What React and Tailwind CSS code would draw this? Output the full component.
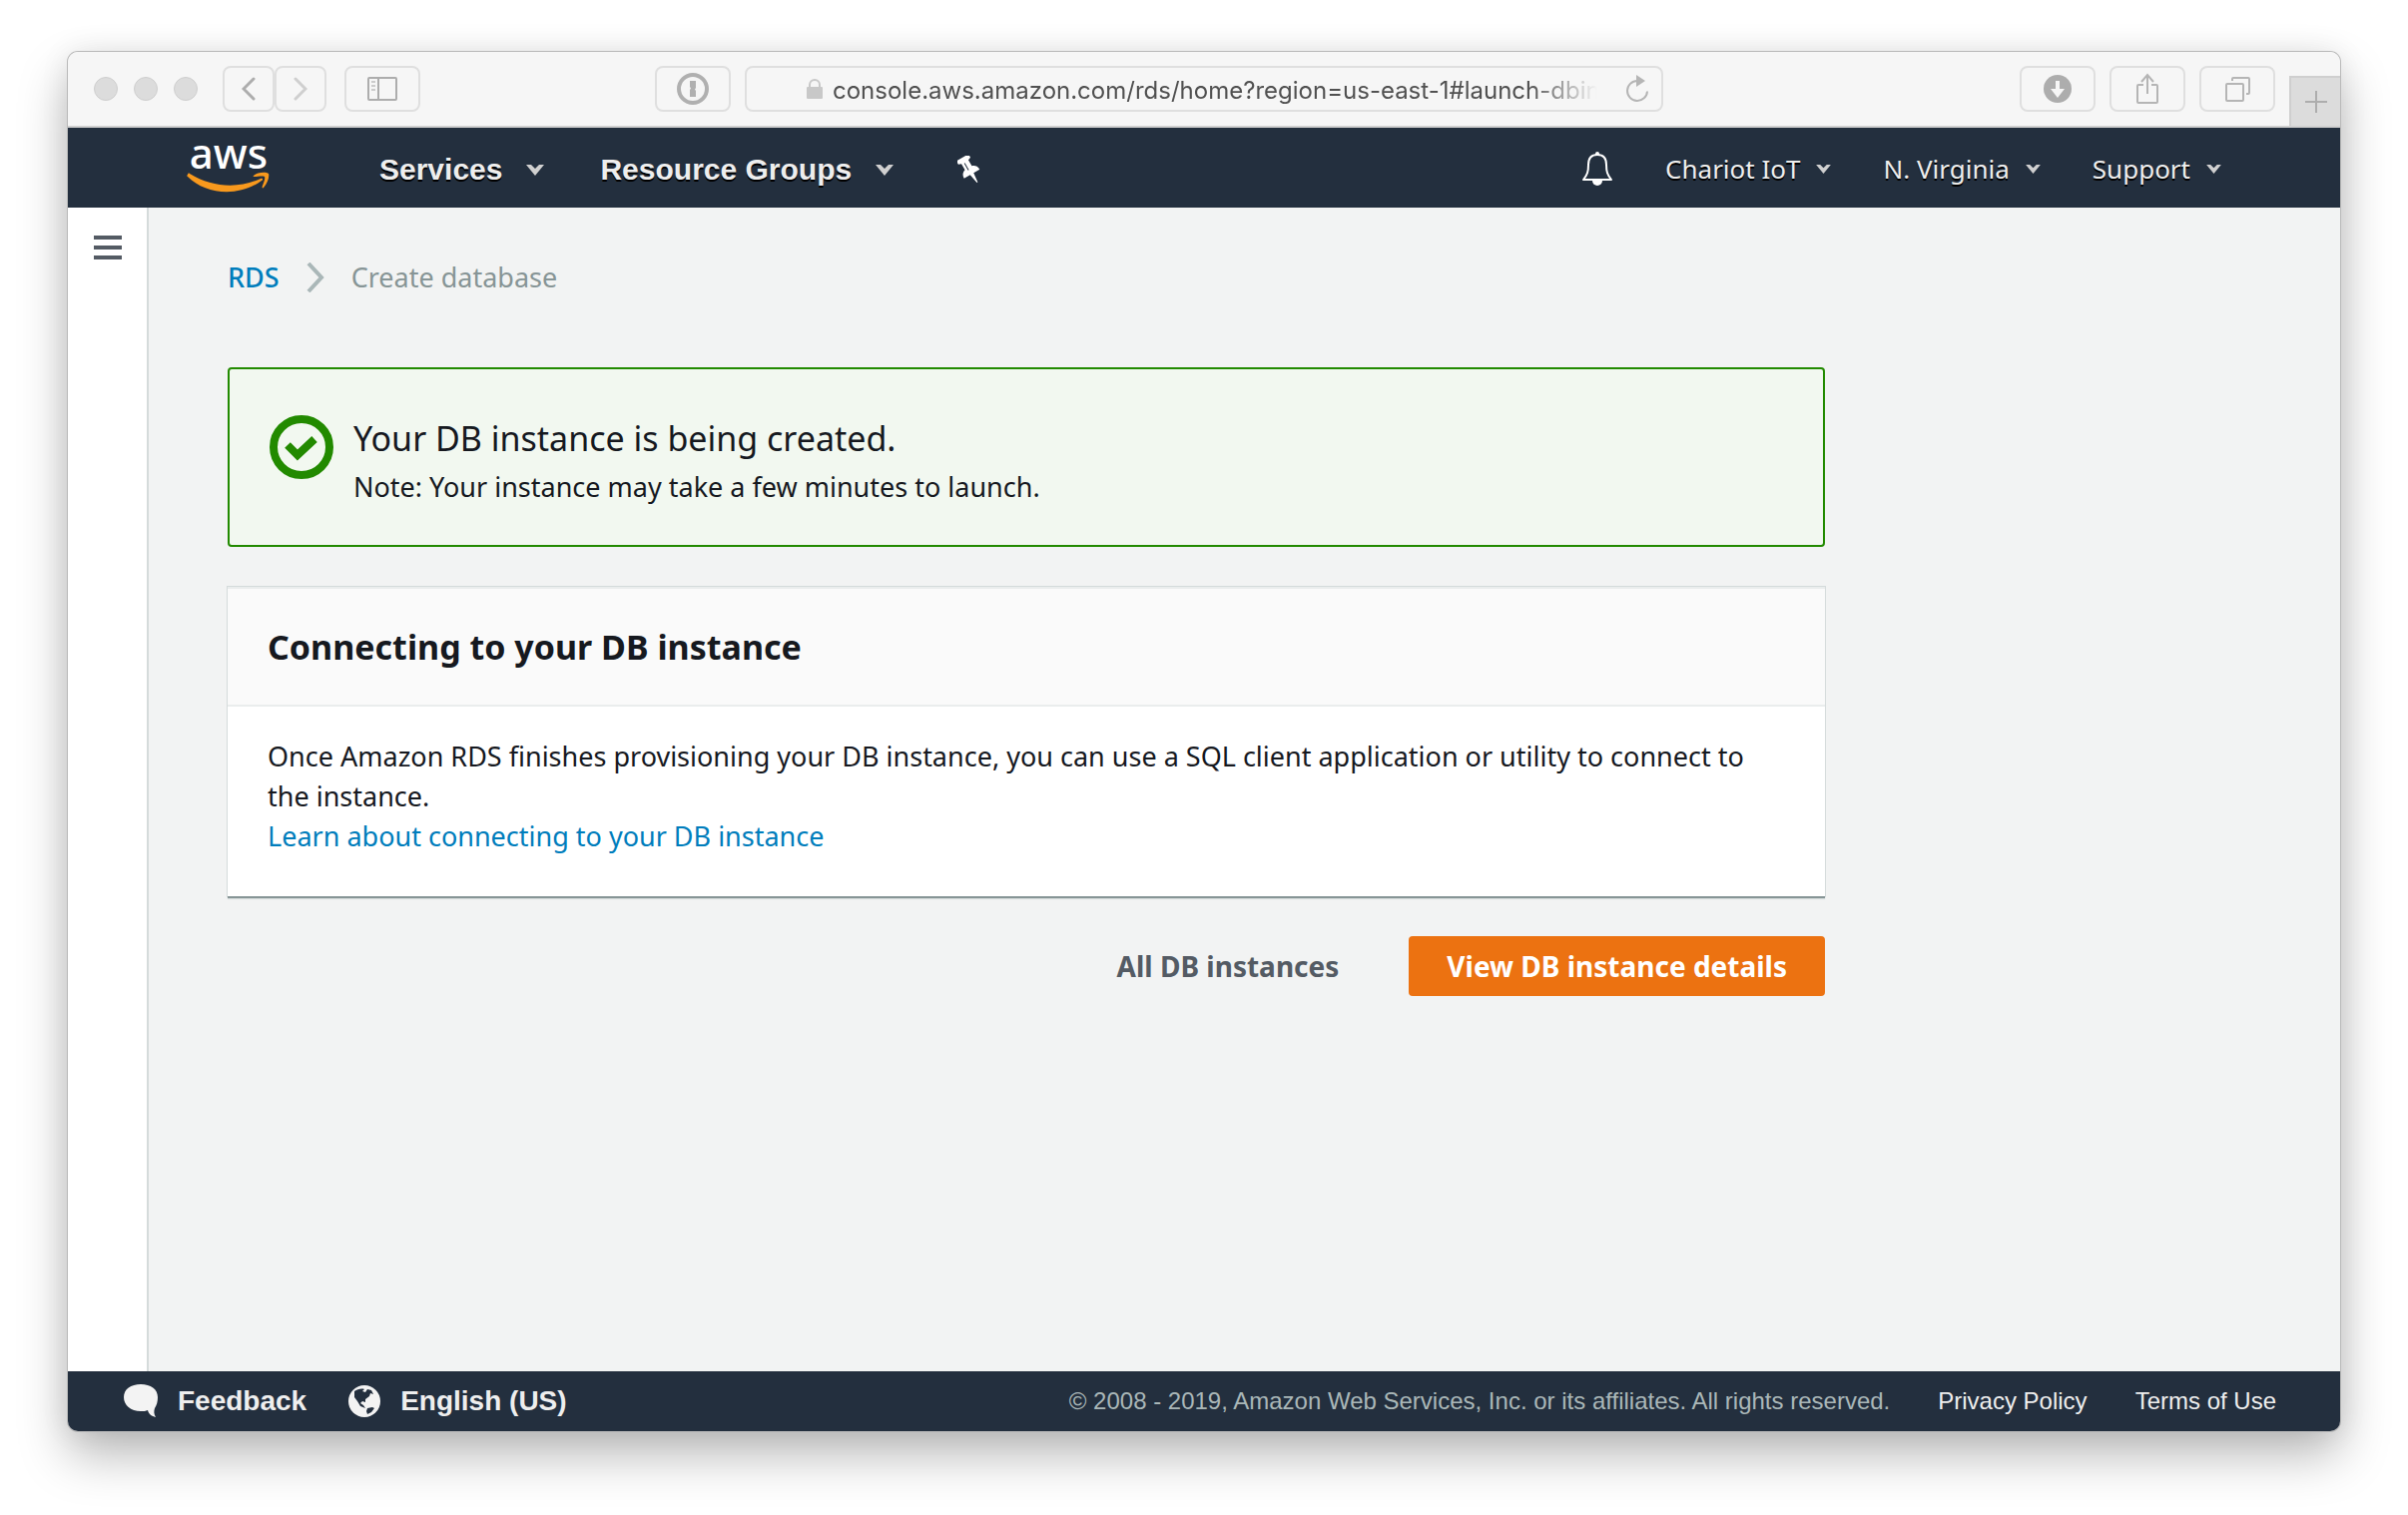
import React from "react";

const icon = "block shrink-0";

function ToolbarButton({ label, width = "w-[76px]", children }) {
  return (
    <button
      type="button"
      aria-label={label}
      className={`${width} flex h-[46px] shrink-0 items-center justify-center rounded-lg border-2 border-[#dfdfdf] bg-[#f6f6f6]`}
    >
      {children}
    </button>
  );
}

function BackIcon({ flip }) {
  return (
    <svg width="14" height="24" viewBox="0 0 14 24" className={icon} fill="none" stroke={flip ? "#cfcfcf" : "#adadad"} strokeWidth="3" strokeLinecap="round">
      <path d={flip ? "M2 2l10 10L2 22" : "M12 2L2 12l10 10"} />
    </svg>
  );
}

function SidebarIcon() {
  return (
    <svg width="30" height="24" viewBox="0 0 30 24" className={icon} fill="none" stroke="#adadad" strokeWidth="2">
      <rect x="1" y="1" width="28" height="22" rx="1" />
      <path d="M11 1v22" />
      <path d="M4 5h4M4 9h4M4 13h4" stroke="#cbcbcb" />
    </svg>
  );
}

function PasswordIcon() {
  return (
    <svg width="32" height="32" viewBox="0 0 32 32" className={icon}>
      <circle cx="16" cy="16" r="14" fill="none" stroke="#b0b0b0" strokeWidth="4" />
      <path d="M13 8h6v7l-1 1.500 1 1.500v6h-6v-7l1-1.500-1-1.500z" fill="#b0b0b0" />
    </svg>
  );
}

function LockIcon() {
  return (
    <svg width="16" height="20" viewBox="0 0 16 20" className={icon}>
      <path d="M3 9V6a5 5 0 0 1 10 0v3" fill="none" stroke="#c8c8c8" strokeWidth="2" />
      <rect y="8" width="16" height="12" rx="1" fill="#c8c8c8" />
    </svg>
  );
}

function ReloadIcon() {
  return (
    <svg width="24" height="28" viewBox="0 0 24 28" className={icon}>
      <path d="M12 6a10 10 0 1 0 10 10.500" fill="none" stroke="#b5b5b5" strokeWidth="2" />
      <path d="M11 0l9 6-9 6z" fill="#b5b5b5" />
    </svg>
  );
}

function DownloadIcon() {
  return (
    <svg width="28" height="28" viewBox="0 0 28 28" className={icon}>
      <circle cx="14" cy="14" r="14" fill="#adadad" />
      <path d="M12 6h4v8h5l-7 9-7-9h5z" fill="#f6f6f6" />
    </svg>
  );
}

function ShareIcon() {
  return (
    <svg width="24" height="32" viewBox="0 0 24 32" className={icon} fill="none" stroke="#b5b5b5" strokeWidth="2">
      <path d="M8 12H3a1 1 0 0 0-1 1v16a1 1 0 0 0 1 1h18a1 1 0 0 0 1-1V13a1 1 0 0 0-1-1h-5M12 21V3M6 9l6-7 6 7" />
    </svg>
  );
}

function TabsIcon() {
  return (
    <svg width="26" height="26" viewBox="0 0 26 26" className={icon} fill="none" stroke="#b5b5b5" strokeWidth="2">
      <rect x="2" y="8" width="17" height="17" rx="1" />
      <path d="M8 5V3a1 1 0 0 1 1-1h15a1 1 0 0 1 1 1v14a1 1 0 0 1-1 1h-2" />
    </svg>
  );
}

function Caret({ small }) {
  return (
    <svg width={small ? 15 : 18} height={small ? 9 : 11} viewBox="0 0 18 11" className={icon}>
      <path d="M0 0h5l4 4 4-4h5l-9 11z" fill="#d0d0d0" />
    </svg>
  );
}

function AwsLogo() {
  return (
    <svg width="84" height="80" viewBox="0 -13 84 80" className="block shrink-0 overflow-visible" role="img" aria-label="aws">
      <text x="42" y="28" textAnchor="middle" fontFamily="Noto Sans, sans-serif" fontSize="42" fontWeight="500" fill="#fff">aws</text>
      <path d="M1 34c0-1 1-2 2-1 23 14 49 15 71 5 2-1 3 1 1 2C52 57 19 54 1 36c-1-1-1-1 0-2z" fill="#f8991d" />
      <path d="M67 35c4-4 13-4 15-2 1 3-1 10-5 14-1 1-2 0-1-2 1-3 3-7 2-9-2-1-7 0-10 0-1 0-2 0-1-1z" fill="#f8991d" />
    </svg>
  );
}

function PinIcon() {
  return (
    <svg width="24" height="28" viewBox="0 0 24 28" className={icon}>
      <g transform="rotate(-30 12 14)">
        <path d="M5 0h14v4l-3 1v7c3 1 5 3 5 7h-7l-1 10h-1l-2-10H3c0-4 2-6 5-7V5L5 4z" fill="#fff" />
        <path d="M11 6v8" stroke="#232f3e" strokeWidth="1" />
      </g>
    </svg>
  );
}

function BellIcon() {
  return (
    <svg width="32" height="34" viewBox="0 0 32 34" className={icon}>
      <path d="M16 3c-6 0-9 4-9 10 0 7-1 10-5 15h28c-4-5-5-8-5-15 0-6-3-10-9-10z" fill="none" stroke="#fff" strokeWidth="2" strokeLinejoin="round" />
      <circle cx="16" cy="2" r="2" fill="#fff" />
      <path d="M11 29h10a5 5 0 0 1-10 0z" fill="#fff" />
    </svg>
  );
}

function BubbleIcon() {
  return (
    <svg width="34" height="34" viewBox="0 0 34 34" className={icon}>
      <path d="M17 0C7 0 0 5 0 13s7 14 17 14c3 0 5 0 7-1 1 4 4 6 8 7-2-3-2-6-1-9 2-3 3-7 3-11C34 5 27 0 17 0z" fill="#f3f3f3" />
    </svg>
  );
}

function GlobeIcon() {
  return (
    <svg width="32" height="32" viewBox="0 0 32 32" className={icon}>
      <circle cx="16" cy="16" r="16" fill="#f3f3f3" />
      <path d="M6 6c3-2 7-3 10-2l-2 2 3 1 2-3 4 1 2 4-3-1-1 3-4 3v3l-3-1-2 2 3 2 2 3-5-2-3-5-3-4z" fill="#232f3e" />
      <path d="M19 23l5-1 2 1-3 4-4 2-1-3z" fill="#232f3e" />
    </svg>
  );
}

function NavItem({ children }) {
  return (
    <button type="button" className="flex items-center gap-4 font-['Noto_Sans',sans-serif] text-[26px] leading-8 whitespace-nowrap text-[#eee] text-shadow-[0_2px_0_#000]">
      {children}
      <Caret small />
    </button>
  );
}

function MainNavItem({ children }) {
  return (
    <button type="button" className="flex items-center gap-6 text-[30px] leading-8 font-bold whitespace-nowrap text-[#eee] text-shadow-[0_2px_0_#000]">
      {children}
      <Caret />
    </button>
  );
}

export default function App() {
  return (
    <div className="flex min-h-screen flex-col bg-white px-[68px] pt-[52px] pb-[84px] font-['Liberation_Sans',Arial,sans-serif]">
      <div className="flex grow flex-col overflow-hidden rounded-[10px] shadow-[0_0_0_1px_#b9b9b9,0_24px_50px_rgba(0,0,0,0.28),0_0_30px_rgba(0,0,0,0.08)]">
        <div className="flex h-[76px] shrink-0 items-center border-b-2 border-[#d0d0d0] bg-[#f6f6f6]">
          <div className="flex gap-4 pl-[26px]">
            <span className="size-6 rounded-full border border-[#cfcfcf] bg-[#dcdcdc]" />
            <span className="size-6 rounded-full border border-[#cfcfcf] bg-[#dcdcdc]" />
            <span className="size-6 rounded-full border border-[#cfcfcf] bg-[#dcdcdc]" />
          </div>
          <div className="ml-[25px] flex">
            <ToolbarButton label="Back" width="w-[52px]"><BackIcon /></ToolbarButton>
            <ToolbarButton label="Forward" width="w-[52px]"><BackIcon flip /></ToolbarButton>
          </div>
          <div className="ml-[18px]">
            <ToolbarButton label="Sidebar"><SidebarIcon /></ToolbarButton>
          </div>
          <div className="flex grow justify-center gap-[14px] pr-[138px] pl-4">
            <ToolbarButton label="Passwords"><PasswordIcon /></ToolbarButton>
            <div className="flex h-[46px] w-[920px] items-center rounded-lg border-2 border-[#dfdfdf] pr-3 pl-[60px]">
              <LockIcon />
              <input
                type="text"
                aria-label="Address"
                defaultValue="console.aws.amazon.com/rds/home?region=us-east-1#launch-dbinstance"
                className="ml-[10px] min-w-0 grow bg-transparent pt-1 font-['Inter',sans-serif] text-[24px] leading-8 text-[#505050] outline-none mask-[linear-gradient(to_right,#000_91%,transparent_100%)]"
              />
              <button type="button" aria-label="Reload" className="ml-7"><ReloadIcon /></button>
            </div>
          </div>
          <div className="flex gap-[14px]">
            <ToolbarButton label="Downloads"><DownloadIcon /></ToolbarButton>
            <ToolbarButton label="Share"><ShareIcon /></ToolbarButton>
            <ToolbarButton label="Show tabs"><TabsIcon /></ToolbarButton>
          </div>
          <button type="button" aria-label="New tab" className="ml-[14px] flex h-[50px] w-[51px] items-center justify-center self-end border-t-2 border-l-2 border-[#cfcfcf] bg-[#dcdcdc]">
            <svg width="22" height="22" viewBox="0 0 22 22" stroke="#adadad" strokeWidth="2">
              <path d="M11 0v22M0 11h22" />
            </svg>
          </button>
        </div>

        <header className="flex h-20 shrink-0 items-center bg-[#232f3e] pr-[119px] pl-[119px]">
          <AwsLogo />
          <nav className="ml-[109px] flex items-center gap-[56px] pt-1">
            <MainNavItem>Services</MainNavItem>
            <MainNavItem>Resource Groups</MainNavItem>
            <button type="button" aria-label="Pin shortcuts" className="ml-2"><PinIcon /></button>
          </nav>
          <div className="ml-auto flex items-center gap-[52px] pt-0.5">
            <button type="button" aria-label="Notifications"><BellIcon /></button>
            <NavItem>Chariot IoT</NavItem>
            <NavItem>N. Virginia</NavItem>
            <NavItem>Support</NavItem>
          </div>
        </header>

        <div className="flex grow">
          <aside className="w-[81px] shrink-0 border-r-2 border-[#d5dbdb] bg-white">
            <button type="button" aria-label="Open navigation" className="mt-7 ml-[26px] flex w-7 flex-col gap-[6px]">
              <span className="h-1 w-full bg-[#545b64]" />
              <span className="h-1 w-full bg-[#545b64]" />
              <span className="h-1 w-full bg-[#545b64]" />
            </button>
          </aside>
          <main className="grow bg-[#f2f3f3] px-[79px] pt-[50px] font-['Noto_Sans',sans-serif] text-[#16191f]">
            <div className="w-full max-w-[1600px]">
              <nav aria-label="Breadcrumb" className="flex h-10 items-center gap-[27px] text-[27px] leading-10">
                <a href="#rds" className="font-medium text-[#007dbc]">RDS</a>
                <svg width="18" height="30" viewBox="0 0 18 30" className={icon} fill="none" stroke="#aab7b8" strokeWidth="4">
                  <path d="M2 1l13 14L2 29" />
                </svg>
                <span className="text-[#879596]">Create database</span>
              </nav>

              <section className="mt-[70px] flex h-[180px] gap-5 rounded border-2 border-[#228a00] bg-[#f2f8f0] pt-[46px] pl-10">
                <svg width="64" height="64" viewBox="0 0 64 64" className={icon} fill="none" stroke="#228a00" strokeWidth="8">
                  <circle cx="32" cy="32" r="28" />
                  <path d="M18 30l10 10 17-16" />
                </svg>
                <div>
                  <h2 className="text-[34px] leading-[46px]">Your DB instance is being created.</h2>
                  <p className="mt-[6px] text-[27px] leading-10">Note: Your instance may take a few minutes to launch.</p>
                </div>
              </section>

              <section className="mt-10 bg-white shadow-[0_2px_0_#879596,0_3px_1px_#d5dbdb,0_0_0_1px_#d5dbdb]">
                <div className="border-t-2 border-b-2 border-[#eaeded] bg-[#fafafa] px-10 pt-9 pb-9">
                  <h2 className="text-[34px] leading-[44px] font-bold">Connecting to your DB instance</h2>
                </div>
                <div className="px-10 pt-[30px] pb-10 text-[27px] leading-10">
                  <p>Once Amazon RDS finishes provisioning your DB instance, you can use a SQL client application or utility to connect to the instance.</p>
                  <a href="#connect" className="text-[#007dbc]">Learn about connecting to your DB instance</a>
                </div>
              </section>

              <div className="mt-10 flex justify-end gap-8 text-[28px] leading-[60px] font-bold">
                <button type="button" className="px-[38px] text-[#545b64]">All DB instances</button>
                <button type="button" className="rounded bg-[#ec7211] px-[38px] text-white">View DB instance details</button>
              </div>
            </div>
          </main>
        </div>

        <footer className="flex h-[60px] shrink-0 items-center bg-[#232f3e] pr-[64px] pl-[56px] text-[24px] leading-8 text-[#eee]">
          <a href="#feedback" className="flex items-center gap-5 text-[28px] font-bold"><BubbleIcon />Feedback</a>
          <button type="button" className="ml-[42px] flex items-center gap-5 text-[28px] font-bold"><GlobeIcon />English (US)</button>
          <p className="ml-auto text-[#aab7b8]">© 2008 - 2019, Amazon Web Services, Inc. or its affiliates. All rights reserved.</p>
          <a href="#privacy" className="ml-12">Privacy Policy</a>
          <a href="#terms" className="ml-12">Terms of Use</a>
        </footer>
      </div>
    </div>
  );
}
